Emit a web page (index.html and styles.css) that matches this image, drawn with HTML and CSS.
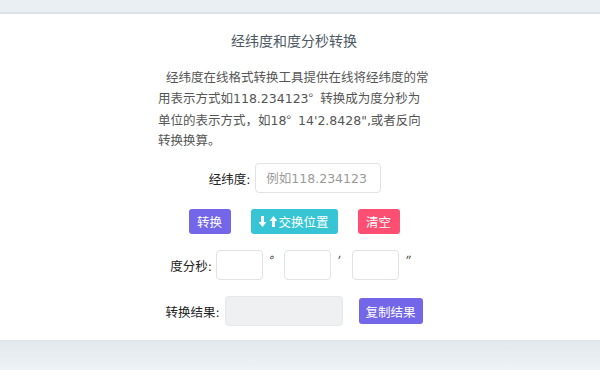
FILE: index.html
```html
<!DOCTYPE html>
<html lang="zh-CN">
<head>
<meta charset="utf-8">
<title>经纬度和度分秒转换</title>
<link rel="stylesheet" href="styles.css">
</head>
<body>
<div class="topbar"></div>
<main class="panel">
  <h1 class="title">经纬度和度分秒转换</h1>
  <p class="intro">&nbsp;&nbsp;经纬度在线格式转换工具提供在线将经纬度的常用表示方式如118.234123<span class="deg">°</span>转换成为度分秒为单位的表示方式，如18<span class="deg">°</span>14'2.8428",或者反向转换换算。</p>
  <div class="row row-lnglat">
    <label class="label">经纬度:</label>
    <input class="field field-wide" type="text" placeholder="例如118.234123">
  </div>
  <div class="row row-buttons">
    <button class="btn btn-purple">转换</button>
    <button class="btn btn-teal"><svg class="arrows" width="18" height="11" viewBox="0 0 18 11"><path d="M2 0h3v6h2.5L3.5 11-0.5 6H2z" fill="#fff"/><path d="M13 11h3V5h2.5L14.5 0 10.5 5H13z" fill="#fff"/></svg>交换位置</button>
    <button class="btn btn-red">清空</button>
  </div>
  <div class="row row-dms">
    <label class="label">度分秒:</label>
    <input class="field field-small" type="text">
    <span class="unit">°</span>
    <input class="field field-small" type="text">
    <span class="unit">′</span>
    <input class="field field-small" type="text">
    <span class="unit">″</span>
  </div>
  <div class="row row-result">
    <label class="label">转换结果:</label>
    <input class="field field-result" type="text" readonly>
    <button class="btn btn-purple btn-copy">复制结果</button>
  </div>
</main>
<div class="bottombar"></div>
</body>
</html>
```

FILE: styles.css
```css
html, body {
  margin: 0;
  padding: 0;
}
body {
  width: 600px;
  height: 370px;
  overflow: hidden;
  background: #edf3f6;
  font-family: "DejaVu Sans", "Noto Sans CJK SC", sans-serif;
  color: #333;
}
.topbar {
  height: 12px;
  background: #e9eff2;
  border-bottom: 2px solid #dde3e7;
}
.panel {
  height: 326px;
  background: #fff;
  display: flex;
  flex-direction: column;
  align-items: center;
  box-sizing: border-box;
  padding: 16px 12px 0 0;
}
.title {
  margin: 0;
  font-family: "Noto Sans CJK SC", sans-serif;
  font-size: 14px;
  line-height: 20px;
  font-weight: normal;
  color: #4c5863;
}
.intro {
  margin: 18px 0 0 0;
  width: 272px;
  font-size: 12.5px;
  line-height: 20.3px;
  color: #555;
}
.deg {
  font-family: "Noto Sans CJK SC", sans-serif;
  margin-right: 7px;
}
.row {
  display: flex;
  align-items: center;
  justify-content: center;
}
.label {
  font-size: 12.5px;
  color: #222;
  margin-right: 5px;
}
.field {
  box-sizing: border-box;
  height: 30px;
  border: 1px solid #e0e2e6;
  border-radius: 4px;
  background: #fff;
  font-family: inherit;
  font-size: 12.5px;
  padding: 0 10px;
  outline: none;
}
.field::placeholder {
  color: #9a9a9a;
}
.row-lnglat {
  margin-top: 12px;
  padding-left: 2px;
}
.field-wide {
  width: 126px;
}
.row-buttons {
  margin-top: 16px;
  gap: 20px;
}
.btn {
  box-sizing: border-box;
  height: 25px;
  border: none;
  border-radius: 3px;
  color: #fff;
  font-family: "Noto Sans CJK SC", sans-serif;
  font-size: 12.5px;
  padding: 0;
  display: inline-flex;
  align-items: center;
  justify-content: center;
}
.btn-purple {
  background: #7466e9;
  width: 42px;
}
.btn-teal {
  background: #37c5d6;
  width: 87px;
}
.btn-red {
  background: #fe4f72;
  width: 42px;
}
.arrows {
  margin-right: 1px;
}
.row-dms {
  margin-top: 16px;
  padding-left: 2px;
}
.row-dms .label {
  margin-right: 4px;
}
.field-small {
  width: 47px;
}
.unit {
  width: 21px;
  box-sizing: border-box;
  padding-left: 5px;
  font-family: "Noto Sans CJK SC", sans-serif;
  font-size: 12px;
  font-style: italic;
  align-self: flex-start;
  line-height: 20px;
  color: #333;
}
.row-result {
  margin-top: 16px;
}
.field-result {
  width: 118px;
  background: #eff0f2;
  border-color: #e6e7ea;
}
.btn-copy {
  width: 64px;
  height: 26px;
  margin-left: 16px;
}
.bottombar {
  height: 30px;
  background: linear-gradient(#e2e8eb, #edf3f6);
  border-top: 1px solid #dfe5e8;
}
```
